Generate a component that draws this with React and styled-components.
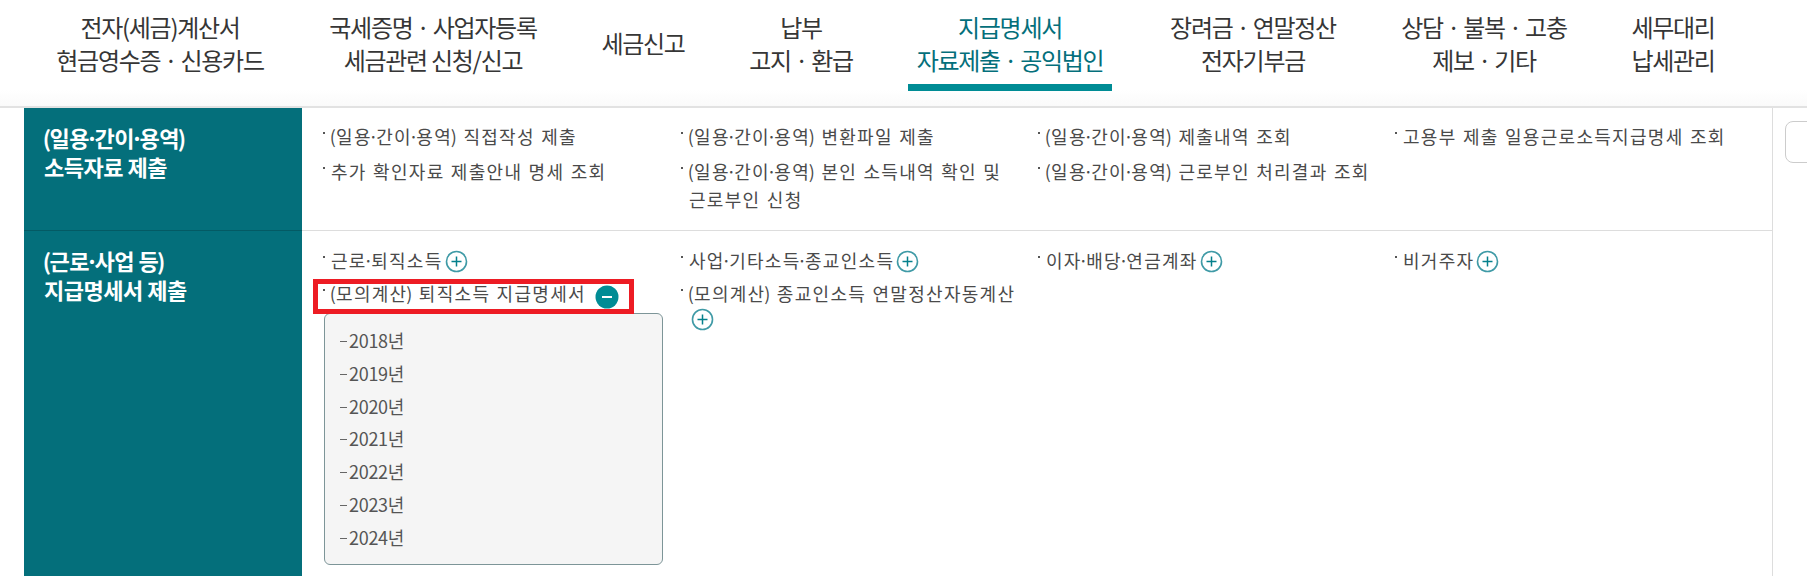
import React from 'react'
import styled, { createGlobalStyle } from 'styled-components'

const GlobalStyle = createGlobalStyle`
  html, body {
    margin: 0;
    height: 576px;
    overflow: hidden;
    background: #fff;
  }
  body {
    font-family: "Noto Sans CJK KR", "Noto Sans", sans-serif;
  }
  ul {
    margin: 0;
    padding: 0;
    list-style: none;
  }
`

const Header = styled.header`
  height: 106px;
  padding-left: 24px;
  border-bottom: 2px solid #e2e2e2;
  background: linear-gradient(#fff 85%, #fafafa);
`

const Nav = styled.nav`
  display: grid;
  grid-template-columns: 272px 274px 146px 170px 248px 238px 224px 154px;
  height: 100%;
`

const NavItem = styled.a`
  position: relative;
  display: flex;
  flex-direction: column;
  align-items: center;
  padding-top: ${p => (p.$single ? '26px' : '10px')};
  font-size: 24px;
  line-height: 33px;
  letter-spacing: -1.3px;
  color: ${p => (p.$active ? '#046f7b' : '#363636')};

  ${p => p.$active && `
    &::after {
      content: '';
      position: absolute;
      left: 22px;
      top: 84px;
      width: 204px;
      height: 7px;
      background: #008c95;
    }
  `}
`

const Body = styled.div`
  display: grid;
  grid-template-columns: 1749px 1fr;
  padding-left: 24px;
`

const Table = styled.div`
  display: flex;
  flex-direction: column;
  border-right: 1px solid #ddd;
`

const Row = styled.section`
  display: grid;
  grid-template-columns: 278px 1fr;
  min-height: ${p => p.$height || 'auto'};
  border-bottom: 1px solid ${p => (p.$last ? 'transparent' : '#ddd')};
`

const RowTitle = styled.h3`
  margin: 0 0 -1px;
  padding: 15px 20px;
  border-bottom: 1px solid #045a64;
  background: #046f7b;
  color: #fff;
  font-size: 22px;
  font-weight: 700;
  line-height: 29px;
  letter-spacing: -0.5px;
`

const Squeezed = styled.span`
  margin: 0 ${p => p.$by};
`

const Columns = styled.div`
  display: grid;
  grid-template-columns: 358px 357px 357px 1fr;
  padding: ${p => p.$top} 0 0 20px;
`

const Items = styled.ul`
  display: flex;
  flex-direction: column;
  gap: ${p => p.$gap || '7px'};
`

const Item = styled.li`
  position: relative;
  padding-left: 9px;
  font-size: 18px;
  line-height: 28px;
  letter-spacing: 1.3px;
  word-spacing: 1px;
  color: #4a4a4a;

  &::before {
    content: '';
    position: absolute;
    left: 1px;
    top: 10px;
    width: 2px;
    height: 2px;
    background: #555;
  }

  ${p => p.$marked && `
    &::after {
      content: '';
      position: absolute;
      left: -9px;
      top: 0;
      width: 321px;
      height: 35px;
      box-sizing: border-box;
      border: 5px solid #ed1c24;
      pointer-events: none;
    }
  `}
`

const PlusIcon = styled.svg`
  width: 23px;
  height: 23px;
  margin: -6px 0 -6px 2px;
  vertical-align: ${p => (p.$wrapped ? '4px' : '1px')};
`

const MinusIcon = styled.svg`
  width: 24px;
  height: 24px;
  margin: -6px 0 -6px 9px;
  vertical-align: -2px;
`

const YearPanel = styled.ul`
  width: 339px;
  height: 252px;
  box-sizing: border-box;
  margin: 6px 0 0 2px;
  padding: 10px 15px;
  border: 1px solid #7d9598;
  border-radius: 6px;
  background: #f5f5f5;
`

const Year = styled.li`
  font-size: 18px;
  line-height: 32.8px;
  letter-spacing: -0.3px;
  color: #555;

  &::before {
    content: '';
    display: inline-block;
    width: 7px;
    height: 1px;
    margin-right: 2px;
    vertical-align: 6px;
    background: #666;
  }
`

const SideButton = styled.button`
  width: 60px;
  height: 42px;
  margin: 13px 0 0 12px;
  border: 1px solid #ccc;
  border-radius: 8px;
  background: #fff;
`

const Plus = ({ wrapped }) => (
  <PlusIcon viewBox="0 0 23 23" $wrapped={wrapped}>
    <circle cx="11.5" cy="11.5" r="10" fill="#fff" stroke="#3f9aa6" strokeWidth="1.6" />
    <path d="M11.5 6.5v10M6.5 11.5h10" stroke="#04808c" strokeWidth="1.5" />
  </PlusIcon>
)

const Minus = () => (
  <MinusIcon viewBox="0 0 24 24">
    <circle cx="12" cy="12" r="11.5" fill="#008c95" />
    <path d="M7 12h10" stroke="#fff" strokeWidth="2" />
  </MinusIcon>
)

// dots and brackets sit much tighter in the original font
const Tight = ({ children }) => children.split(/([·()])/).map((part, i) => {
  if (part === '·') return <Squeezed key={i} $by="-3.5px">{part}</Squeezed>
  if (part === '(' || part === ')') return <Squeezed key={i} $by="-1.2px">{part}</Squeezed>
  return part
})

const menu = [
  ['전자(세금)계산서', '현금영수증 · 신용카드'],
  ['국세증명 · 사업자등록', '세금관련 신청/신고'],
  ['세금신고'],
  ['납부', '고지 · 환급'],
  ['지급명세서', '자료제출 · 공익법인'],
  ['장려금 · 연말정산', '전자기부금'],
  ['상담 · 불복 · 고충', '제보 · 기타'],
  ['세무대리', '납세관리'],
]

const years = ['2018년', '2019년', '2020년', '2021년', '2022년', '2023년', '2024년']

export default function App() {
  return (
    <>
      <GlobalStyle />
      <Header>
        <Nav>
          {menu.map((lines, i) => (
            <NavItem key={lines[0]} $active={i === 4} $single={lines.length === 1}>
              {lines.map(line => <span key={line}>{line}</span>)}
            </NavItem>
          ))}
        </Nav>
      </Header>
      <Body>
        <Table>
          <Row $height="122px">
            <RowTitle><Tight>(일용·간이·용역)</Tight><br />소득자료 제출</RowTitle>
            <Columns $top="14px">
              <Items>
                <Item><Tight>(일용·간이·용역) 직접작성 제출</Tight></Item>
                <Item>추가 확인자료 제출안내 명세 조회</Item>
              </Items>
              <Items>
                <Item><Tight>(일용·간이·용역) 변환파일 제출</Tight></Item>
                <Item><Tight>(일용·간이·용역) 본인 소득내역 확인 및</Tight><br />근로부인 신청</Item>
              </Items>
              <Items>
                <Item><Tight>(일용·간이·용역) 제출내역 조회</Tight></Item>
                <Item><Tight>(일용·간이·용역) 근로부인 처리결과 조회</Tight></Item>
              </Items>
              <Items>
                <Item>고용부 제출 일용근로소득지급명세 조회</Item>
              </Items>
            </Columns>
          </Row>
          <Row $height="346px" $last>
            <RowTitle><Tight>(근로·사업 등)</Tight><br />지급명세서 제출</RowTitle>
            <Columns $top="15px">
              <Items $gap="5px">
                <Item><Tight>근로·퇴직소득</Tight><Plus /></Item>
                <div>
                  <Item $marked><Tight>(모의계산) 퇴직소득 지급명세서</Tight><Minus /></Item>
                  <YearPanel>
                    {years.map(y => <Year key={y}>{y}</Year>)}
                  </YearPanel>
                </div>
              </Items>
              <Items $gap="5px">
                <Item><Tight>사업·기타소득·종교인소득</Tight><Plus /></Item>
                <Item><Tight>(모의계산) 종교인소득 연말정산자동계산</Tight><br /><Plus wrapped /></Item>
              </Items>
              <Items>
                <Item><Tight>이자·배당·연금계좌</Tight><Plus /></Item>
              </Items>
              <Items>
                <Item>비거주자<Plus /></Item>
              </Items>
            </Columns>
          </Row>
        </Table>
        <div><SideButton aria-label="메뉴" /></div>
      </Body>
    </>
  )
}
